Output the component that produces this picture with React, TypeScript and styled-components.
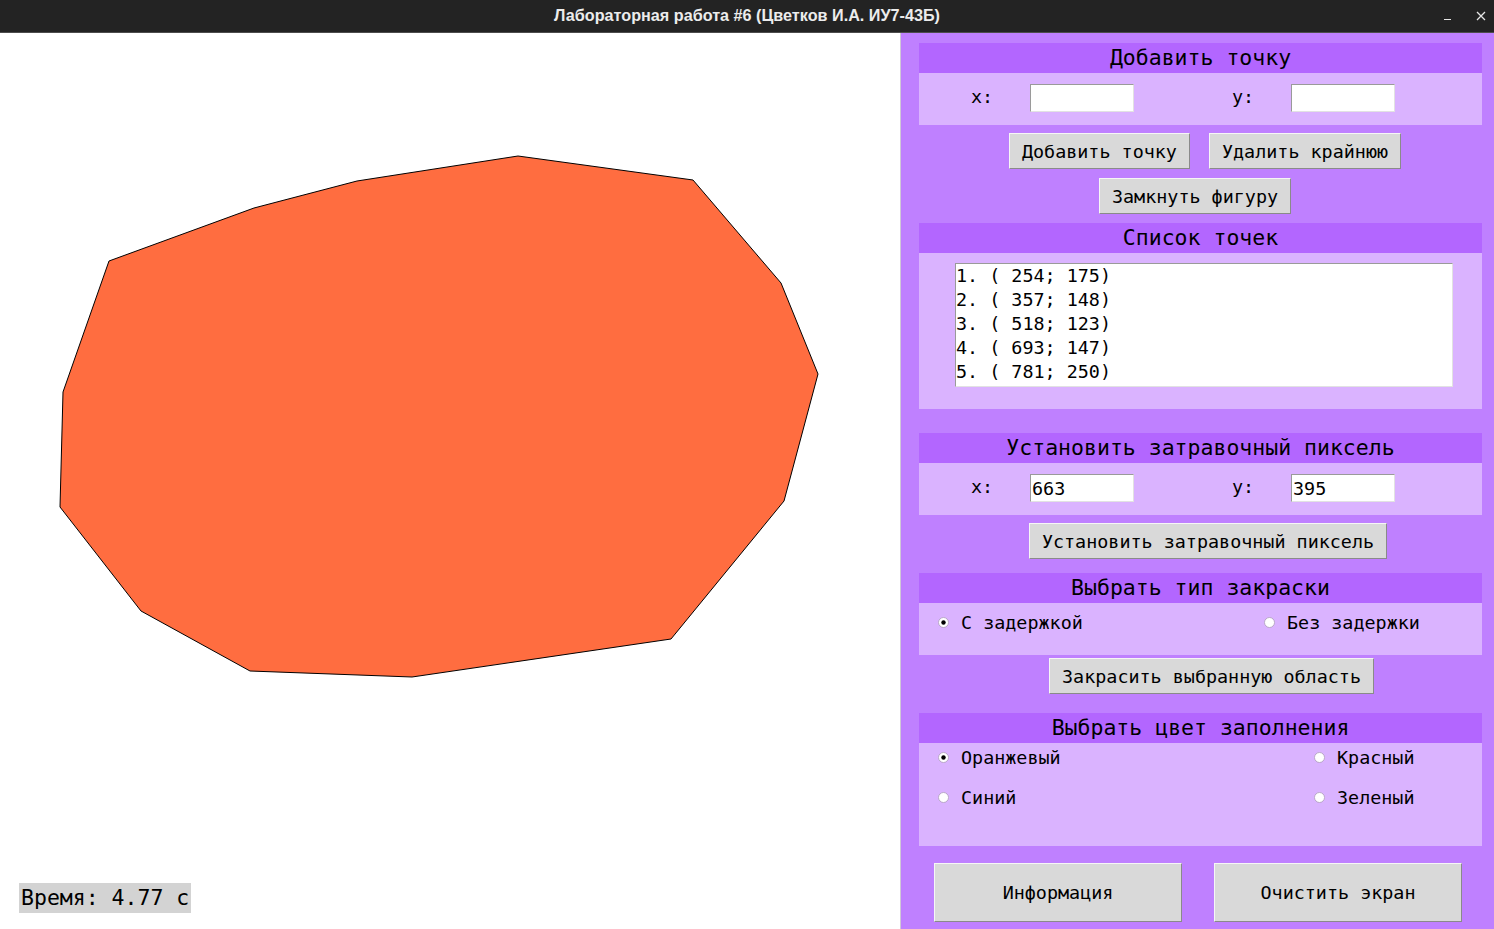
import React from 'react';
import styled, { createGlobalStyle } from 'styled-components';

const GlobalStyle = createGlobalStyle`
  html, body { margin: 0; padding: 0; background: #ffffff; overflow: hidden; }
  #root { width: 1494px; height: 929px; }
`;

const MONO = `"DejaVu Sans Mono", "Liberation Mono", monospace`;
const BODY_SIZE = '18.4px';

const Window = styled.div`
  width: 1494px;
  height: 929px;
  display: flex;
  flex-direction: column;
  overflow: hidden;
`;

const TitleBar = styled.div`
  height: 32px;
  flex: none;
  background: #232323;
  border-bottom: 1px solid #4d4d4d;
  display: grid;
  grid-template-columns: 1fr auto 1fr;
  align-items: center;
  color: #ececec;
  font-family: "Liberation Sans", Arial, sans-serif;
  font-weight: bold;
  font-size: 16.2px;
`;

const Title = styled.div`
  grid-column: 2;
  margin-top: -2px;
`;

const Controls = styled.div`
  grid-column: 3;
  justify-self: end;
  display: flex;
  align-items: center;
  gap: 10px;
  padding-right: 1px;
  height: 32px;
`;

const ControlBox = styled.div`
  width: 24px;
  height: 24px;
  display: flex;
  align-items: center;
  justify-content: center;
`;

const MinLine = styled.div`
  width: 7px;
  height: 1px;
  background: #e6e6e6;
  margin-top: 7px;
`;

const Main = styled.div`
  flex: 1;
  display: flex;
  min-height: 0;
`;

const Canvas = styled.div`
  width: 900px;
  flex: none;
  position: relative;
  background: #ffffff;
`;

const TimeLabel = styled.div`
  position: absolute;
  left: 19px;
  top: 850px;
  height: 30px;
  line-height: 30px;
  padding: 0 2px;
  background: #d3d3d3;
  font-family: ${MONO};
  font-size: 21.5px;
  color: #000;
  white-space: pre;
`;

const Panel = styled.div`
  flex: 1;
  background: #bf80ff;
  border-left: 1px solid #d0c8d8;
  padding: 0 12px 0 18px;
  display: flex;
  flex-direction: column;
  font-family: ${MONO};
  color: #000;
`;

const Section = styled.section<{ $mt: number }>`
  margin-top: ${(p) => p.$mt}px;
  display: flex;
  flex-direction: column;
`;

const Header = styled.div`
  height: 30px;
  line-height: 30px;
  background: #b366ff;
  text-align: center;
  font-size: 21.5px;
  white-space: pre;
`;

const Body = styled.div<{ $h: number; $pt?: number }>`
  background: #dab3ff;
  height: ${(p) => p.$h}px;
  padding-top: ${(p) => p.$pt ?? 0}px;
  box-sizing: border-box;
`;

const FieldRow = styled.div`
  display: flex;
  gap: 98px;
  padding-left: 52px;
`;

const Field = styled.div`
  display: flex;
  align-items: center;
`;

const FieldLabel = styled.span`
  width: 59px;
  font-size: ${BODY_SIZE};
  margin-top: -3px;
`;

const Entry = styled.input`
  width: 104px;
  height: 28px;
  box-sizing: border-box;
  border: 1px solid;
  border-color: #9a9a9a #e2e2e2 #e2e2e2 #9a9a9a;
  background: #ffffff;
  font-family: ${MONO};
  font-size: ${BODY_SIZE};
  color: #000;
  padding: 0 1px;
  margin: 0;
  outline: none;
`;

const ButtonRow = styled.div<{ $mt: number; $shift: number }>`
  margin-top: ${(p) => p.$mt}px;
  display: flex;
  justify-content: center;
  gap: 19px;
  padding-left: ${(p) => Math.max(0, p.$shift * 2)}px;
  padding-right: ${(p) => Math.max(0, -p.$shift * 2)}px;
`;

const Button = styled.button`
  height: 36px;
  padding: 0 12px;
  margin: 0;
  background: #d9d9d9;
  border: 1px solid;
  border-color: #f6f6f6 #8a8a8a #8a8a8a #f6f6f6;
  font-family: ${MONO};
  font-size: ${BODY_SIZE};
  color: #000;
  white-space: pre;
  cursor: default;
`;

const BigButton = styled(Button)`
  width: 248px;
  height: 59px;
`;

const BottomRow = styled.div`
  margin-top: 17px;
  display: flex;
  gap: 32px;
  padding-left: 15px;
`;

const Listbox = styled.div`
  margin: 10px 0 0 36px;
  width: 498px;
  height: 124px;
  box-sizing: border-box;
  background: #ffffff;
  border: 1px solid;
  border-color: #9a9a9a #e2e2e2 #e2e2e2 #9a9a9a;
  font-size: ${BODY_SIZE};
  line-height: 24px;
  white-space: pre;
`;

const RadioGrid = styled.div<{ $col: number; $pt: number }>`
  display: grid;
  grid-template-columns: ${(p) => p.$col}px auto;
  row-gap: 20px;
  padding: ${(p) => p.$pt}px 0 0 19px;
`;

const RadioItem = styled.div`
  display: flex;
  align-items: center;
  gap: 12px;
  height: 20px;
  font-size: ${BODY_SIZE};
  white-space: pre;
`;

const Indicator = ({ on }: { on?: boolean }) => (
  <svg width="11" height="11" viewBox="0 0 11 11" style={{ flex: 'none' }}>
    <circle cx="5.5" cy="5.5" r="5" fill="#ffffff" stroke="#b3a3c2" strokeWidth="0.9" />
    {on && <circle cx="5.5" cy="5.5" r="2.2" fill="#000" />}
  </svg>
);

const points: [number, number][] = [
  [109, 228], [254, 175], [357, 148], [518, 123], [693, 147], [781, 250], [818, 341],
  [784, 468], [671, 606], [412, 644], [250, 638], [141, 578], [60, 474], [63, 359],
];

const list = ['1. ( 254; 175)', '2. ( 357; 148)', '3. ( 518; 123)', '4. ( 693; 147)', '5. ( 781; 250)'];

export default function App() {
  return (
    <>
      <GlobalStyle />
      <Window>
        <TitleBar>
          <Title>Лабораторная работа #6 (Цветков И.А. ИУ7-43Б)</Title>
          <Controls>
            <ControlBox>
              <MinLine />
            </ControlBox>
            <ControlBox>
              <svg width="10" height="10" viewBox="0 0 10 10">
                <path d="M1 1 L9 9 M9 1 L1 9" stroke="#e6e6e6" strokeWidth="1.3" />
              </svg>
            </ControlBox>
          </Controls>
        </TitleBar>
        <Main>
          <Canvas>
            <svg width="900" height="896" viewBox="0 0 900 896" style={{ display: 'block' }}>
              <polygon
                points={points.map((p) => p.join(',')).join(' ')}
                fill="#ff6d40"
                stroke="#000"
                strokeWidth="1"
              />
            </svg>
            <TimeLabel>Время: 4.77 с</TimeLabel>
          </Canvas>
          <Panel>
            <Section $mt={10}>
              <Header>Добавить точку</Header>
              <Body $h={52} $pt={11}>
                <FieldRow>
                  <Field>
                    <FieldLabel>x:</FieldLabel>
                    <Entry readOnly defaultValue="" />
                  </Field>
                  <Field>
                    <FieldLabel>y:</FieldLabel>
                    <Entry readOnly defaultValue="" />
                  </Field>
                </FieldRow>
              </Body>
            </Section>
            <ButtonRow $mt={8} $shift={4.5}>
              <Button>Добавить точку</Button>
              <Button>Удалить крайнюю</Button>
            </ButtonRow>
            <ButtonRow $mt={9} $shift={-5.5}>
              <Button>Замкнуть фигуру</Button>
            </ButtonRow>
            <Section $mt={9}>
              <Header>Список точек</Header>
              <Body $h={156}>
                <Listbox>
                  {list.map((l) => (
                    <div key={l}>{l}</div>
                  ))}
                </Listbox>
              </Body>
            </Section>
            <Section $mt={24}>
              <Header>Установить затравочный пиксель</Header>
              <Body $h={52} $pt={11}>
                <FieldRow>
                  <Field>
                    <FieldLabel>x:</FieldLabel>
                    <Entry readOnly defaultValue="663" />
                  </Field>
                  <Field>
                    <FieldLabel>y:</FieldLabel>
                    <Entry readOnly defaultValue="395" />
                  </Field>
                </FieldRow>
              </Body>
            </Section>
            <ButtonRow $mt={8} $shift={7.5}>
              <Button>Установить затравочный пиксель</Button>
            </ButtonRow>
            <Section $mt={14}>
              <Header>Выбрать тип закраски</Header>
              <Body $h={52}>
                <RadioGrid $col={326} $pt={9}>
                  <RadioItem>
                    <Indicator on />С задержкой
                  </RadioItem>
                  <RadioItem>
                    <Indicator />Без задержки
                  </RadioItem>
                </RadioGrid>
              </Body>
            </Section>
            <ButtonRow $mt={3} $shift={11}>
              <Button>Закрасить выбранную область</Button>
            </ButtonRow>
            <Section $mt={19}>
              <Header>Выбрать цвет заполнения</Header>
              <Body $h={103}>
                <RadioGrid $col={376} $pt={4}>
                  <RadioItem>
                    <Indicator on />Оранжевый
                  </RadioItem>
                  <RadioItem>
                    <Indicator />Красный
                  </RadioItem>
                  <RadioItem>
                    <Indicator />Синий
                  </RadioItem>
                  <RadioItem>
                    <Indicator />Зеленый
                  </RadioItem>
                </RadioGrid>
              </Body>
            </Section>
            <BottomRow>
              <BigButton>Информация</BigButton>
              <BigButton>Очистить экран</BigButton>
            </BottomRow>
          </Panel>
        </Main>
      </Window>
    </>
  );
}
